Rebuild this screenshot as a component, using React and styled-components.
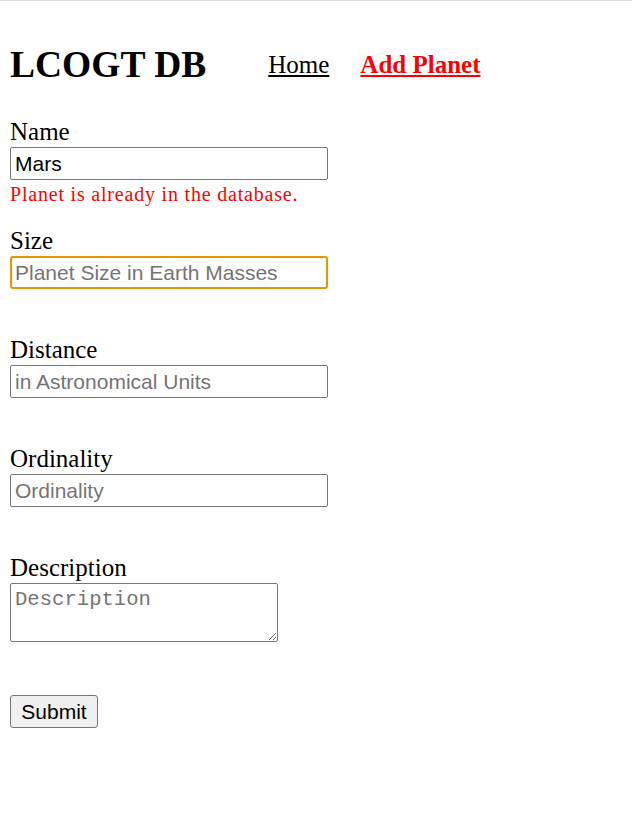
import React from "react";
import styled, { createGlobalStyle, css } from "styled-components";

const GlobalStyle = createGlobalStyle`
  html, body { margin: 0; padding: 0; background: #fff; }
  body { font-family: "Liberation Serif", "Times New Roman", serif; color: #000; }
`;

const Page = styled.div`
  border-top: 1px solid #dcdcdc;
  padding: 0 10px;
  min-height: 822px;
`;

const Header = styled.header`
  display: flex;
  align-items: center;
  margin-top: 42px;
`;

const Title = styled.h1`
  margin: 0;
  font-size: 37.5px;
  font-weight: bold;
  line-height: 43px;
`;

const Nav = styled.nav`
  display: flex;
  gap: 31px;
  margin-left: 62px;
`;

const NavLink = styled.a`
  font-size: 25px;
  line-height: 29px;
  color: ${(p) => (p.$active ? "#ff0000" : "#000")};
  font-weight: ${(p) => (p.$active ? "bold" : "normal")};
  text-decoration: underline;
  cursor: pointer;
`;

const Form = styled.form`
  margin-top: 31px;
  display: flex;
  flex-direction: column;
  align-items: flex-start;
`;

const Field = styled.div`
  display: flex;
  flex-direction: column;
  align-items: flex-start;
`;

const Label = styled.label`
  font-size: 25px;
  line-height: 29px;
`;

const controlBase = css`
  box-sizing: border-box;
  border: 1px solid #767676;
  border-radius: 2px;
  background: #fff;
  color: #000;
  margin: 1px 0 0;
  &::placeholder { color: #757575; opacity: 1; }
`;

const TextInput = styled.input`
  ${controlBase}
  width: 318px;
  height: 33px;
  padding: 0 4px;
  font-family: "Liberation Sans", Arial, sans-serif;
  font-size: 21px;
  outline: none;
  ${(p) =>
    p.$focused &&
    css`
      border: 2px solid #e59700;
      border-radius: 3px;
      padding: 0 3px;
    `}
`;

const TextArea = styled.textarea`
  ${controlBase}
  width: 268px;
  height: 59px;
  padding: 4px 4px 2px;
  font-family: "Liberation Mono", "Courier New", monospace;
  font-size: 20.6px;
  line-height: 24px;
`;

const ErrorSlot = styled.div`
  margin: 3px 0 20px;
  height: 23px;
  font-size: 20px;
  line-height: 23px;
  letter-spacing: 0.8px;
  color: #ff0000;
`;

const SubmitButton = styled.button`
  margin-top: 7px;
  box-sizing: border-box;
  width: 88px;
  height: 33px;
  padding: 0;
  font-family: "Liberation Sans", Arial, sans-serif;
  font-size: 21px;
  color: #000;
  background: #efefef;
  border: 1px solid #767676;
  border-radius: 3px;
`;

const fields = [
  { label: "Name", value: "Mars", placeholder: "", error: "Planet is already in the database." },
  { label: "Size", placeholder: "Planet Size in Earth Masses", focused: true },
  { label: "Distance", placeholder: "in Astronomical Units" },
  { label: "Ordinality", placeholder: "Ordinality" },
];

export default function App() {
  return (
    <>
      <GlobalStyle />
      <Page>
        <Header>
          <Title>LCOGT DB</Title>
          <Nav>
            <NavLink>Home</NavLink>
            <NavLink $active>Add Planet</NavLink>
          </Nav>
        </Header>
        <Form onSubmit={(e) => e.preventDefault()}>
          {fields.map((f) => (
            <Field key={f.label}>
              <Label>{f.label}</Label>
              <TextInput
                defaultValue={f.value}
                placeholder={f.placeholder}
                $focused={f.focused}
              />
              <ErrorSlot>{f.error}</ErrorSlot>
            </Field>
          ))}
          <Field>
            <Label>Description</Label>
            <TextArea placeholder="Description" />
            <ErrorSlot />
          </Field>
          <SubmitButton type="submit">Submit</SubmitButton>
        </Form>
      </Page>
    </>
  );
}
